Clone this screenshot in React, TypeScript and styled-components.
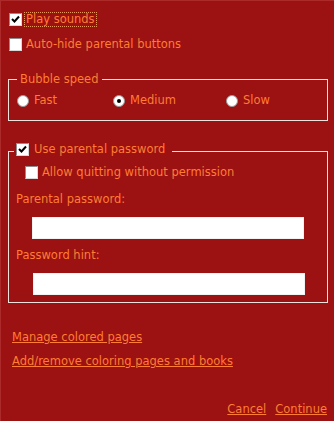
import React from "react";
import styled, { createGlobalStyle } from "styled-components";

const Global = createGlobalStyle`
  html, body { margin: 0; padding: 0; background: #9c1111; }
  body { font-family: "DejaVu Sans", Verdana, sans-serif; font-size: 11.5px; line-height: 13px; color: #ff7b2e; }
`;

const ORANGE = "#ff7d33";
const LINE = "#eee2dc";

const Page = styled.div`
  box-sizing: border-box;
  width: 334px;
  height: 421px;
  padding: 13px 7px 5px 8px;
  display: flex;
  flex-direction: column;
  box-shadow: inset 1px 1px 0 #ad2a2a;
`;

const Row = styled.label<{ $indent?: number; $mt?: number }>`
  display: flex;
  align-items: center;
  height: 13px;
  margin-left: ${(p) => p.$indent ?? 0}px;
  margin-top: ${(p) => p.$mt ?? 0}px;
  color: ${ORANGE};
  white-space: nowrap;
`;

const Box = styled.span`
  box-sizing: border-box;
  width: 13px;
  height: 13px;
  flex: none;
  background: #fff;
  border: 1px solid #8d8d8d;
  border-right-color: #d8d8d8;
  border-bottom-color: #d8d8d8;
  display: flex;
  align-items: center;
  justify-content: center;
`;

const Text = styled.span<{ $focus?: boolean; $gap?: number }>`
  margin-left: ${(p) => p.$gap ?? 3}px;
  padding: 0 1px;
  border: 1px dotted ${(p) => (p.$focus ? "#e89a5a" : "transparent")};
  line-height: 13px;
`;

const Circle = styled.span`
  box-sizing: border-box;
  width: 12px;
  height: 12px;
  flex: none;
  border-radius: 50%;
  background: #fff;
  border: 1px solid #9a9a9a;
  display: flex;
  align-items: center;
  justify-content: center;
`;

const Dot = styled.span`
  width: 4px;
  height: 4px;
  border-radius: 50%;
  background: #000;
`;

const Group = styled.fieldset<{ $mt: number; $pt: number; $pb: number; $pl: number }>`
  box-sizing: border-box;
  width: 320px;
  margin: ${(p) => p.$mt}px 0 0 0;
  padding: ${(p) => p.$pt}px 0 ${(p) => p.$pb}px ${(p) => p.$pl}px;
  border: 1px solid ${LINE};
  min-width: 0;
`;

const Legend = styled.legend<{ $pl: number; $pr: number; $pb?: number }>`
  padding: 0 ${(p) => p.$pr}px ${(p) => p.$pb ?? 0}px ${(p) => p.$pl}px;
  line-height: 13px;
  color: ${ORANGE};
`;

const RadioRow = styled.div`
  display: flex;
  height: 13px;
  align-items: center;
`;

const RadioItem = styled.label<{ $w?: number }>`
  display: flex;
  align-items: center;
  width: ${(p) => (p.$w ? `${p.$w}px` : "auto")};
  color: ${ORANGE};
`;

const Inner = styled.div`
  display: flex;
  flex-direction: column;
  padding-left: 2px;
`;

const FieldLabel = styled.div<{ $mt: number }>`
  margin-top: ${(p) => p.$mt}px;
  height: 13px;
  line-height: 13px;
  color: ${ORANGE};
`;

const Input = styled.div<{ $mt: number; $ml: number }>`
  box-sizing: border-box;
  margin-top: ${(p) => p.$mt}px;
  margin-left: ${(p) => p.$ml}px;
  width: 272px;
  height: 22px;
  background: #fff;
  border: 1px solid #f2f2f2;
`;

const Link = styled.a<{ $mt?: number }>`
  align-self: flex-start;
  margin-top: ${(p) => p.$mt ?? 0}px;
  margin-left: 4px;
  color: ${ORANGE};
  text-decoration: underline;
  line-height: 13px;
  cursor: pointer;
`;

const Footer = styled.div`
  margin-top: auto;
  display: flex;
  justify-content: flex-end;
  gap: 9px;
  ${Link} { margin-left: 0; }
`;

const Check = () => (
  <svg width="9" height="9" viewBox="0 0 9 9">
    <path d="M1 4 L3.5 6.5 L8 1.5" stroke="#000" strokeWidth="2" fill="none" />
  </svg>
);

const CheckBox = ({ checked }: { checked?: boolean }) => <Box>{checked && <Check />}</Box>;

const Radio = ({ checked }: { checked?: boolean }) => <Circle>{checked && <Dot />}</Circle>;

export default function App() {
  return (
    <>
      <Global />
      <Page>
        <Row $indent={1}>
          <CheckBox checked />
          <Text $focus $gap={2}>Play sounds</Text>
        </Row>
        <Row $indent={1} $mt={12}>
          <CheckBox />
          <Text $gap={2}>Auto-hide parental buttons</Text>
        </Row>

        <Group $mt={22} $pt={8} $pb={13} $pl={8}>
          <Legend $pl={3} $pr={4}>Bubble speed</Legend>
          <RadioRow>
            <RadioItem $w={96}>
              <Radio />
              <Text $gap={3}>Fast</Text>
            </RadioItem>
            <RadioItem $w={113}>
              <Radio checked />
              <Text $gap={3}>Medium</Text>
            </RadioItem>
            <RadioItem>
              <Radio />
              <Text $gap={3}>Slow</Text>
            </RadioItem>
          </RadioRow>
        </Group>

        <Group $mt={22} $pt={7} $pb={7} $pl={5}>
          <Legend $pl={2} $pr={5} $pb={3}>
            <Row>
              <CheckBox checked />
              <Text $gap={3}>Use parental password</Text>
            </Row>
          </Legend>
          <Inner>
            <Row $indent={9}>
              <CheckBox />
              <Text $gap={2}>Allow quitting without permission</Text>
            </Row>
            <FieldLabel $mt={14}>Parental password:</FieldLabel>
            <Input $mt={11} $ml={16} />
            <FieldLabel $mt={10}>Password hint:</FieldLabel>
            <Input $mt={11} $ml={17} />
          </Inner>
        </Group>

        <Link $mt={28}>Manage colored pages</Link>
        <Link $mt={11}>Add/remove coloring pages and books</Link>

        <Footer>
          <Link>Cancel</Link>
          <Link>Continue</Link>
        </Footer>
      </Page>
    </>
  );
}
